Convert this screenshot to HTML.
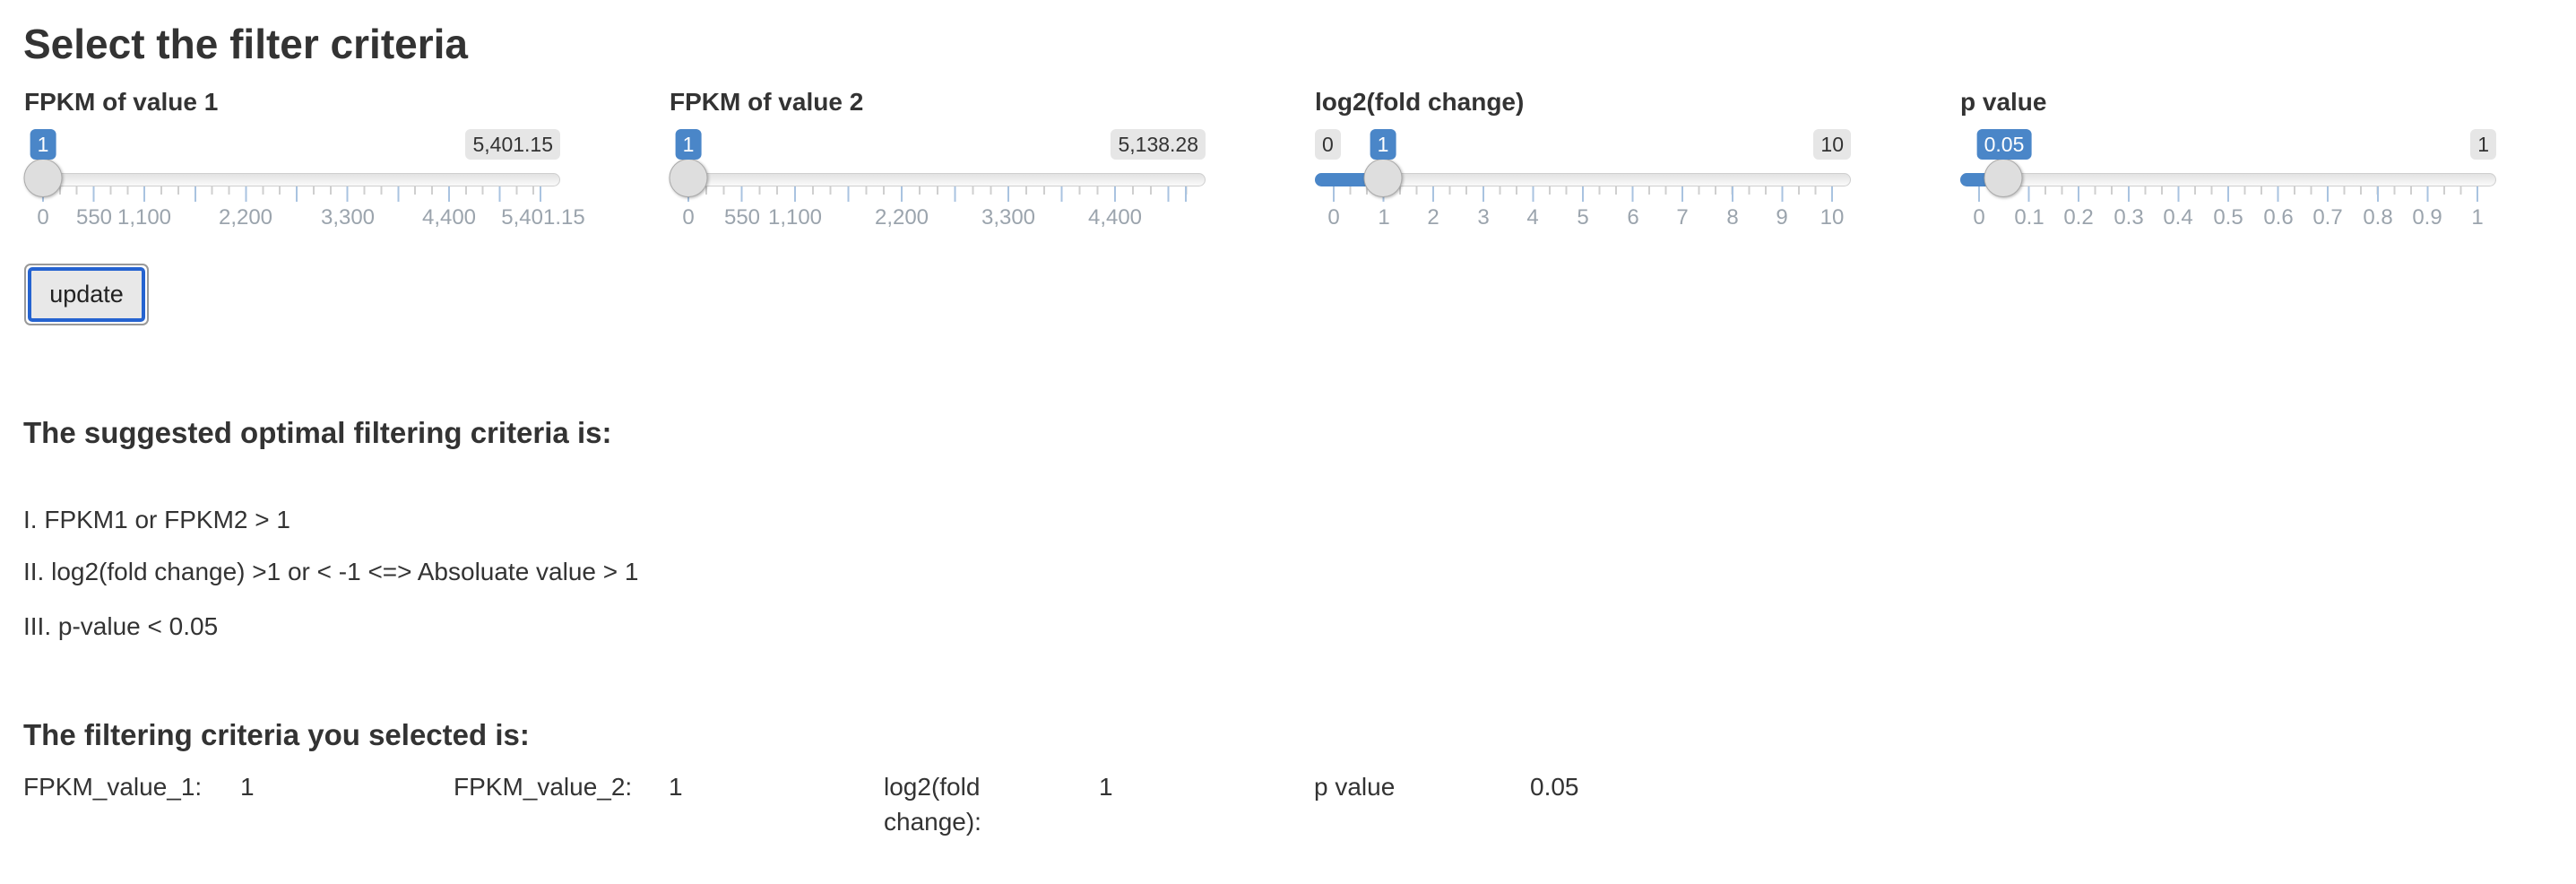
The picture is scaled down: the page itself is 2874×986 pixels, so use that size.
<!DOCTYPE html>
<html><head><meta charset="utf-8"><style>
body{margin:0;width:2874px;height:986px;background:#fff;font-family:"Liberation Sans",Arial,sans-serif;color:#333;position:relative;overflow:hidden}
.a{position:absolute;line-height:1;white-space:nowrap}
.t{font-size:46px;font-weight:bold}
.lb{font-size:28px;font-weight:bold}
.bd{position:absolute;top:144px;height:34px;line-height:34px;font-size:23px;padding:0 8px;border-radius:6px;background:#e6e6e6;color:#333;white-space:nowrap}
.bl{background:#4a86c8;color:#fff;transform:translateX(-50%)}
.tr{position:absolute;top:193px;width:596px;height:13px;border:1px solid #cfcfcf;border-radius:8px;background:linear-gradient(#e2e2e2,#fafafa)}
.fill{position:absolute;top:193px;height:15px;background:#4a86c8;border-radius:8px 0 0 8px}
.hd{position:absolute;top:177px;width:41px;height:41px;border:1px solid #aaa;border-radius:50%;background:#dedede;box-shadow:1px 1px 3px rgba(0,0,0,.3);transform:translateX(-50%)}
.mj{position:absolute;top:208px;height:17px;width:559px}
.mn{position:absolute;top:208px;height:9px;width:559px}
.tl{position:absolute;top:231px;font-size:24px;line-height:1;color:#9ba4ad;transform:translateX(-50%);white-space:nowrap}
.ft{position:absolute;top:208px;height:17px;width:2px;background:#a9c3e0}
.h4{font-size:33px;font-weight:bold}
.bt{font-size:28px}
</style></head><body>
<div class="a t" style="left:26px;top:26px">Select the filter criteria</div>

<!-- slider 1 -->
<div class="a lb" style="left:27px;top:100px">FPKM of value 1</div>
<div class="tr" style="left:27px"></div>
<div class="mn" style="left:47px;background:repeating-linear-gradient(to right,#cfcfcf 0 2px,transparent 2px 18.87px)"></div>
<div class="mj" style="left:47px;background:repeating-linear-gradient(to right,#a9c3e0 0 2px,transparent 2px 56.62px)"></div>
<div class="ft" style="left:602px"></div>
<div class="hd" style="left:48px"></div>
<div class="bd bl" style="left:48px">1</div>
<div class="bd" style="right:2249px">5,401.15</div>
<div class="tl" style="left:48px">0</div><div class="tl" style="left:105px">550</div><div class="tl" style="left:161px">1,100</div><div class="tl" style="left:274px">2,200</div><div class="tl" style="left:388px">3,300</div><div class="tl" style="left:501px">4,400</div><div class="tl" style="left:606px">5,401.15</div>

<!-- slider 2 -->
<div class="a lb" style="left:747px;top:100px">FPKM of value 2</div>
<div class="tr" style="left:747px"></div>
<div class="mn" style="left:767px;background:repeating-linear-gradient(to right,#cfcfcf 0 2px,transparent 2px 19.84px)"></div>
<div class="mj" style="left:767px;background:repeating-linear-gradient(to right,#a9c3e0 0 2px,transparent 2px 59.51px)"></div>
<div class="ft" style="left:1322px"></div>
<div class="hd" style="left:768px"></div>
<div class="bd bl" style="left:768px">1</div>
<div class="bd" style="right:1529px">5,138.28</div>
<div class="tl" style="left:768px">0</div><div class="tl" style="left:828px">550</div><div class="tl" style="left:887px">1,100</div><div class="tl" style="left:1006px">2,200</div><div class="tl" style="left:1125px">3,300</div><div class="tl" style="left:1244px">4,400</div>

<!-- slider 3 -->
<div class="a lb" style="left:1467px;top:100px">log2(fold change)</div>
<div class="tr" style="left:1467px"></div>
<div class="fill" style="left:1467px;width:76px"></div>
<div class="mn" style="left:1487px;background:repeating-linear-gradient(to right,#cfcfcf 0 2px,transparent 2px 18.53px)"></div>
<div class="mj" style="left:1487px;background:repeating-linear-gradient(to right,#a9c3e0 0 2px,transparent 2px 55.6px)"></div>
<div class="hd" style="left:1543px"></div>
<div class="bd" style="left:1467px">0</div>
<div class="bd bl" style="left:1543px">1</div>
<div class="bd" style="right:809px">10</div>
<div class="tl" style="left:1488px">0</div><div class="tl" style="left:1544px">1</div><div class="tl" style="left:1599px">2</div><div class="tl" style="left:1655px">3</div><div class="tl" style="left:1710px">4</div><div class="tl" style="left:1766px">5</div><div class="tl" style="left:1822px">6</div><div class="tl" style="left:1877px">7</div><div class="tl" style="left:1933px">8</div><div class="tl" style="left:1988px">9</div><div class="tl" style="left:2044px">10</div>

<!-- slider 4 -->
<div class="a lb" style="left:2187px;top:100px">p value</div>
<div class="tr" style="left:2187px"></div>
<div class="fill" style="left:2187px;width:48px"></div>
<div class="mn" style="left:2207px;background:repeating-linear-gradient(to right,#cfcfcf 0 2px,transparent 2px 18.53px)"></div>
<div class="mj" style="left:2207px;background:repeating-linear-gradient(to right,#a9c3e0 0 2px,transparent 2px 55.6px)"></div>
<div class="hd" style="left:2235px"></div>
<div class="bd bl" style="left:2236px">0.05</div>
<div class="bd" style="right:89px">1</div>
<div class="tl" style="left:2208px">0</div><div class="tl" style="left:2264px">0.1</div><div class="tl" style="left:2319px">0.2</div><div class="tl" style="left:2375px">0.3</div><div class="tl" style="left:2430px">0.4</div><div class="tl" style="left:2486px">0.5</div><div class="tl" style="left:2542px">0.6</div><div class="tl" style="left:2597px">0.7</div><div class="tl" style="left:2653px">0.8</div><div class="tl" style="left:2708px">0.9</div><div class="tl" style="left:2764px">1</div>

<!-- button -->
<div style="position:absolute;left:27px;top:294px;width:135px;height:65px;border:2px solid #999;border-radius:7px;background:#fff"></div>
<div style="position:absolute;left:31px;top:298px;width:123px;height:53px;border:4px solid #2563d0;border-radius:5px;background:#e8e8e8;font-size:27px;line-height:53px;text-align:center;color:#222">update</div>

<div class="a h4" style="left:26px;top:466px">The suggested optimal filtering criteria is:</div>
<div class="a bt" style="left:26px;top:566px">I. FPKM1 or FPKM2 &gt; 1</div>
<div class="a bt" style="left:26px;top:624px">II. log2(fold change) &gt;1 or &lt; -1 &lt;=&gt; Absoluate value &gt; 1</div>
<div class="a bt" style="left:26px;top:685px">III. p-value &lt; 0.05</div>

<div class="a h4" style="left:26px;top:803px">The filtering criteria you selected is:</div>
<div class="a bt" style="left:26px;top:864px">FPKM_value_1:</div>
<div class="a bt" style="left:268px;top:864px">1</div>
<div class="a bt" style="left:506px;top:864px">FPKM_value_2:</div>
<div class="a bt" style="left:746px;top:864px">1</div>
<div class="a bt" style="left:986px;top:864px">log2(fold</div>
<div class="a bt" style="left:986px;top:903px">change):</div>
<div class="a bt" style="left:1226px;top:864px">1</div>
<div class="a bt" style="left:1466px;top:864px">p value</div>
<div class="a bt" style="left:1707px;top:864px">0.05</div>
</body></html>
